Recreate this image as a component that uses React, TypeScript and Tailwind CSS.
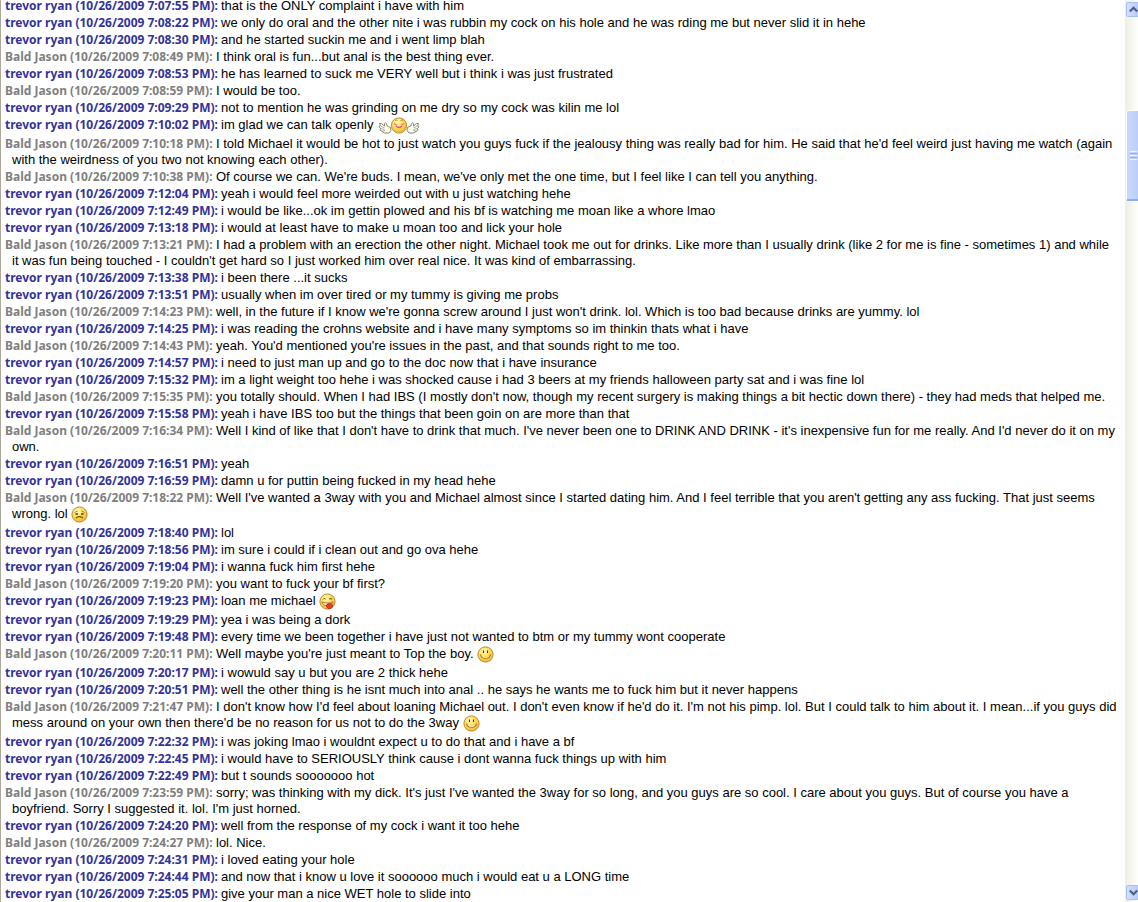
import { Fragment } from "react";
import clsx from "clsx";

type Mood = "smile" | "sad" | "tongue" | "hug";

type Message = {
  from: "t" | "b";
  time: string;
  lines: string[];
  mood?: Mood;
};

const NAMES = { t: "trevor ryan", b: "Bald Jason" };

const MESSAGES: Message[] = [
  { from: "t", time: "7:07:55", lines: ["that is the ONLY complaint i have with him"] },
  { from: "t", time: "7:08:22", lines: ["we only do oral and the other nite i was rubbin my cock on his hole and he was rding me but never slid it in hehe"] },
  { from: "t", time: "7:08:30", lines: ["and he started suckin me and i went limp blah"] },
  { from: "b", time: "7:08:49", lines: ["I think oral is fun...but anal is the best thing ever."] },
  { from: "t", time: "7:08:53", lines: ["he has learned to suck me VERY well but i think i was just frustrated"] },
  { from: "b", time: "7:08:59", lines: ["I would be too."] },
  { from: "t", time: "7:09:29", lines: ["not to mention he was grinding on me dry so my cock was kilin me lol"] },
  { from: "t", time: "7:10:02", lines: ["im glad we can talk openly"], mood: "hug" },
  {
    from: "b",
    time: "7:10:18",
    lines: [
      "I told Michael it would be hot to just watch you guys fuck if the jealousy thing was really bad for him. He said that he'd feel weird just having me watch (again",
      "with the weirdness of you two not knowing each other).",
    ],
  },
  { from: "b", time: "7:10:38", lines: ["Of course we can. We're buds. I mean, we've only met the one time, but I feel like I can tell you anything."] },
  { from: "t", time: "7:12:04", lines: ["yeah i would feel more weirded out with u just watching hehe"] },
  { from: "t", time: "7:12:49", lines: ["i would be like...ok im gettin plowed and his bf is watching me moan like a whore lmao"] },
  { from: "t", time: "7:13:18", lines: ["i would at least have to make u moan too and lick your hole"] },
  {
    from: "b",
    time: "7:13:21",
    lines: [
      "I had a problem with an erection the other night. Michael took me out for drinks. Like more than I usually drink (like 2 for me is fine - sometimes 1) and while",
      "it was fun being touched - I couldn't get hard so I just worked him over real nice. It was kind of embarrassing.",
    ],
  },
  { from: "t", time: "7:13:38", lines: ["i been there ...it sucks"] },
  { from: "t", time: "7:13:51", lines: ["usually when im over tired or my tummy is giving me probs"] },
  { from: "b", time: "7:14:23", lines: ["well, in the future if I know we're gonna screw around I just won't drink. lol. Which is too bad because drinks are yummy. lol"] },
  { from: "t", time: "7:14:25", lines: ["i was reading the crohns website and i have many symptoms so im thinkin thats what i have"] },
  { from: "b", time: "7:14:43", lines: ["yeah. You'd mentioned you're issues in the past, and that sounds right to me too."] },
  { from: "t", time: "7:14:57", lines: ["i need to just man up and go to the doc now that i have insurance"] },
  { from: "t", time: "7:15:32", lines: ["im a light weight too hehe i was shocked cause i had 3 beers at my friends halloween party sat and i was fine lol"] },
  { from: "b", time: "7:15:35", lines: ["you totally should. When I had IBS (I mostly don't now, though my recent surgery is making things a bit hectic down there) - they had meds that helped me."] },
  { from: "t", time: "7:15:58", lines: ["yeah i have IBS too but the things that been goin on are more than that"] },
  {
    from: "b",
    time: "7:16:34",
    lines: [
      "Well I kind of like that I don't have to drink that much. I've never been one to DRINK AND DRINK - it's inexpensive fun for me really. And I'd never do it on my",
      "own.",
    ],
  },
  { from: "t", time: "7:16:51", lines: ["yeah"] },
  { from: "t", time: "7:16:59", lines: ["damn u for puttin being fucked in my head hehe"] },
  {
    from: "b",
    time: "7:18:22",
    lines: [
      "Well I've wanted a 3way with you and Michael almost since I started dating him. And I feel terrible that you aren't getting any ass fucking. That just seems",
      "wrong. lol",
    ],
    mood: "sad",
  },
  { from: "t", time: "7:18:40", lines: ["lol"] },
  { from: "t", time: "7:18:56", lines: ["im sure i could if i clean out and go ova hehe"] },
  { from: "t", time: "7:19:04", lines: ["i wanna fuck him first hehe"] },
  { from: "b", time: "7:19:20", lines: ["you want to fuck your bf first?"] },
  { from: "t", time: "7:19:23", lines: ["loan me michael"], mood: "tongue" },
  { from: "t", time: "7:19:29", lines: ["yea i was being a dork"] },
  { from: "t", time: "7:19:48", lines: ["every time we been together i have just not wanted to btm or my tummy wont cooperate"] },
  { from: "b", time: "7:20:11", lines: ["Well maybe you're just meant to Top the boy."], mood: "smile" },
  { from: "t", time: "7:20:17", lines: ["i wowuld say u but you are 2 thick hehe"] },
  { from: "t", time: "7:20:51", lines: ["well the other thing is he isnt much into anal .. he says he wants me to fuck him but it never happens"] },
  {
    from: "b",
    time: "7:21:47",
    lines: [
      "I don't know how I'd feel about loaning Michael out. I don't even know if he'd do it. I'm not his pimp. lol. But I could talk to him about it. I mean...if you guys did",
      "mess around on your own then there'd be no reason for us not to do the 3way",
    ],
    mood: "smile",
  },
  { from: "t", time: "7:22:32", lines: ["i was joking lmao i wouldnt expect u to do that and i have a bf"] },
  { from: "t", time: "7:22:45", lines: ["i would have to SERIOUSLY think cause i dont wanna fuck things up with him"] },
  { from: "t", time: "7:22:49", lines: ["but t sounds sooooooo hot"] },
  {
    from: "b",
    time: "7:23:59",
    lines: [
      "sorry; was thinking with my dick. It's just I've wanted the 3way for so long, and you guys are so cool. I care about you guys. But of course you have a",
      "boyfriend. Sorry I suggested it. lol. I'm just horned.",
    ],
  },
  { from: "t", time: "7:24:20", lines: ["well from the response of my cock i want it too hehe"] },
  { from: "b", time: "7:24:27", lines: ["lol. Nice."] },
  { from: "t", time: "7:24:31", lines: ["i loved eating your hole"] },
  { from: "t", time: "7:24:44", lines: ["and now that i know u love it soooooo much i would eat u a LONG time"] },
  { from: "t", time: "7:25:05", lines: ["give your man a nice WET hole to slide into"] },
];

function Face({ mood }: { mood: Mood }) {
  return (
    <>
      <circle cx="8.5" cy="8.5" r="7.6" fill="url(#face)" stroke="#b98a2c" />
      {mood === "smile" && (
        <>
          <path d="M6.500 4.500v2.500M10.500 4.500v2.500" stroke="#4a3300" strokeWidth="1.1" />
          <path d="M3.500 8.500c.8 5 9.200 5 10 0" fill="none" stroke="#c0601c" strokeWidth="1.1" />
          <path d="M5 10.300c1.500 1.800 5.500 1.800 7 0" fill="none" stroke="#fff8d8" strokeWidth=".8" />
        </>
      )}
      {mood === "sad" && (
        <>
          <path d="M3.500 6.500l3-1.500M13.500 6.500l-3-1.500" stroke="#b07a20" strokeWidth=".9" />
          <path d="M4.500 8h2.500M10 8h2.500" stroke="#5a3c08" strokeWidth="1.300" />
          <path d="M5 12.200c1.500-2 5.500-2 7 0" fill="none" stroke="#7a4308" strokeWidth="1.200" />
        </>
      )}
      {mood === "tongue" && (
        <>
          <path d="M4 6.500l1.200-1.200 1.500 1M10 5.800h3" fill="none" stroke="#6b4408" />
          <path d="M3 8.800c3 1.700 8 1.700 11 0-.3 1.700-1.200 2.700-2.500 3.200l-5 .5c-2-.4-3-1.700-3.500-3.700z" fill="#fff0e0" stroke="#a85a1c" strokeWidth=".8" />
          <path d="M7.500 12c1.500-1.800 5.500-2 6 .3.300 2-1.300 3.500-3.200 3.400-1.800-.1-3.300-1.900-2.800-3.700z" fill="#ee3a28" stroke="#a8241c" strokeWidth=".8" />
        </>
      )}
      {mood === "hug" && (
        <>
          <path d="M4.500 3.500q1.500-1 2.500 0M10 3.500q1.500-1 2.500 0" fill="none" stroke="#d08a1c" />
          <path d="M3.500 6.500l2.500 1.500M13.500 6.500l-2.500 1.500" stroke="#f06a92" strokeWidth="1.200" />
          <path d="M5.500 9q3 3 6 0" fill="none" stroke="#e0508a" strokeWidth="1.200" />
        </>
      )}
    </>
  );
}

function Hand() {
  return (
    <>
      <path
        d="M1.500 6.500h2l3 2.500v-2.500q1-1.500 2 0l.7 2.500 3.300 1.500.5 3-2 2.500H6.500L4 14.500 2 13l.5-1.500L1 9.500l1.500-.8z"
        fill="#fffff0"
        stroke="#77776a"
        strokeWidth=".9"
      />
      <path d="M2.500 9l4 1.800M2.500 11.500l4 1M4 14.200l3-.7" fill="none" stroke="#8b8b7c" strokeWidth=".7" />
    </>
  );
}

function Emoticon({ mood }: { mood: Mood }) {
  if (mood === "hug") {
    return (
      <svg width="42" height="18" viewBox="0 0 42 18" role="img" aria-label="hug" className="ml-px inline-block align-[-6px]">
        <Hand />
        <g transform="matrix(-1 0 0 1 42 0)">
          <Hand />
        </g>
        <g transform="translate(12.5 0)">
          <Face mood={mood} />
        </g>
      </svg>
    );
  }
  return (
    <svg width="18" height="18" viewBox="0 0 18 18" role="img" aria-label={mood} className="inline-block align-[-6px]">
      <Face mood={mood} />
    </svg>
  );
}

function Row({ message }: { message: Message }) {
  const { from, time, lines, mood } = message;
  return (
    <li className="-indent-[7px] whitespace-nowrap pl-[11px] text-[13px] leading-4">
      <span
        className={clsx(
          "inline-block h-4 indent-0 align-top font-['Noto_Sans',sans-serif] text-[12px] font-bold leading-4",
          from === "t" ? "w-[216px] text-[#333399]" : "w-[211px] text-[#808080]",
        )}
      >
        {NAMES[from]} (10/26/2009 {time} PM):
      </span>
      {lines.map((line, i) => (
        <Fragment key={i}>
          {i > 0 && <br />}
          {line}
        </Fragment>
      ))}
      {mood && (
        <>
          {" "}
          <Emoticon mood={mood} />
        </>
      )}
    </li>
  );
}

function ArrowButton({ label, d }: { label: string; d: string }) {
  return (
    <button
      type="button"
      aria-label={label}
      className="flex h-[15px] w-[15px] shrink-0 items-center justify-center rounded-xs border border-[#a9bff0] bg-linear-to-r from-[#d2defd] to-[#b5c9fa]"
    >
      <svg width="9" height="7" viewBox="0 0 9 7" aria-hidden="true">
        <path d={d} fill="none" stroke="#4d6185" strokeWidth="2.2" />
      </svg>
    </button>
  );
}

function Scrollbar() {
  return (
    <div className="w-[13px] shrink-0 overflow-hidden bg-linear-to-r from-[#eeede5] to-[#fefefb]">
      <div className="flex h-full w-[17px] flex-col items-center py-[2px]">
        <ArrowButton label="Scroll up" d="M.8 5.500L4.500 1.800 8.200 5.500" />
        <div className="h-[93px] shrink-0" />
        <button
          type="button"
          aria-label="Scroll position"
          className="flex h-[91px] w-[15px] shrink-0 flex-col items-center justify-center gap-px rounded-xs border border-b-2 border-white border-b-[#8fade8] bg-linear-to-r from-[#cbd9fd] to-[#b9cbfb]"
        >
          <span className="h-px w-[7px] bg-[#eef4fe]" />
          <span className="h-px w-[7px] bg-[#8cb0f8]" />
          <span className="h-px w-[7px] bg-[#eef4fe]" />
          <span className="h-px w-[7px] bg-[#8cb0f8]" />
          <span className="h-px w-[7px] bg-[#eef4fe]" />
        </button>
        <div className="grow" />
        <ArrowButton label="Scroll down" d="M.8 1.500L4.500 5.200 8.200 1.500" />
      </div>
    </div>
  );
}

export default function App() {
  return (
    <div className="flex h-screen overflow-hidden border-l border-[#aca899] bg-white font-['Liberation_Sans',Arial,sans-serif] text-black">
      <svg width="0" height="0" className="absolute" aria-hidden="true">
        <defs>
          <radialGradient id="face" cx=".4" cy=".3" r=".75">
            <stop offset="0" stopColor="#fffcc0" />
            <stop offset=".5" stopColor="#fbdc52" />
            <stop offset="1" stopColor="#eeb03a" />
          </radialGradient>
        </defs>
      </svg>
      {/* the log stays pinned to its newest message */}
      <ul className="flex min-w-0 grow flex-col justify-end gap-px overflow-hidden">
        {MESSAGES.map((message) => (
          <Row key={message.time} message={message} />
        ))}
      </ul>
      <Scrollbar />
    </div>
  );
}
